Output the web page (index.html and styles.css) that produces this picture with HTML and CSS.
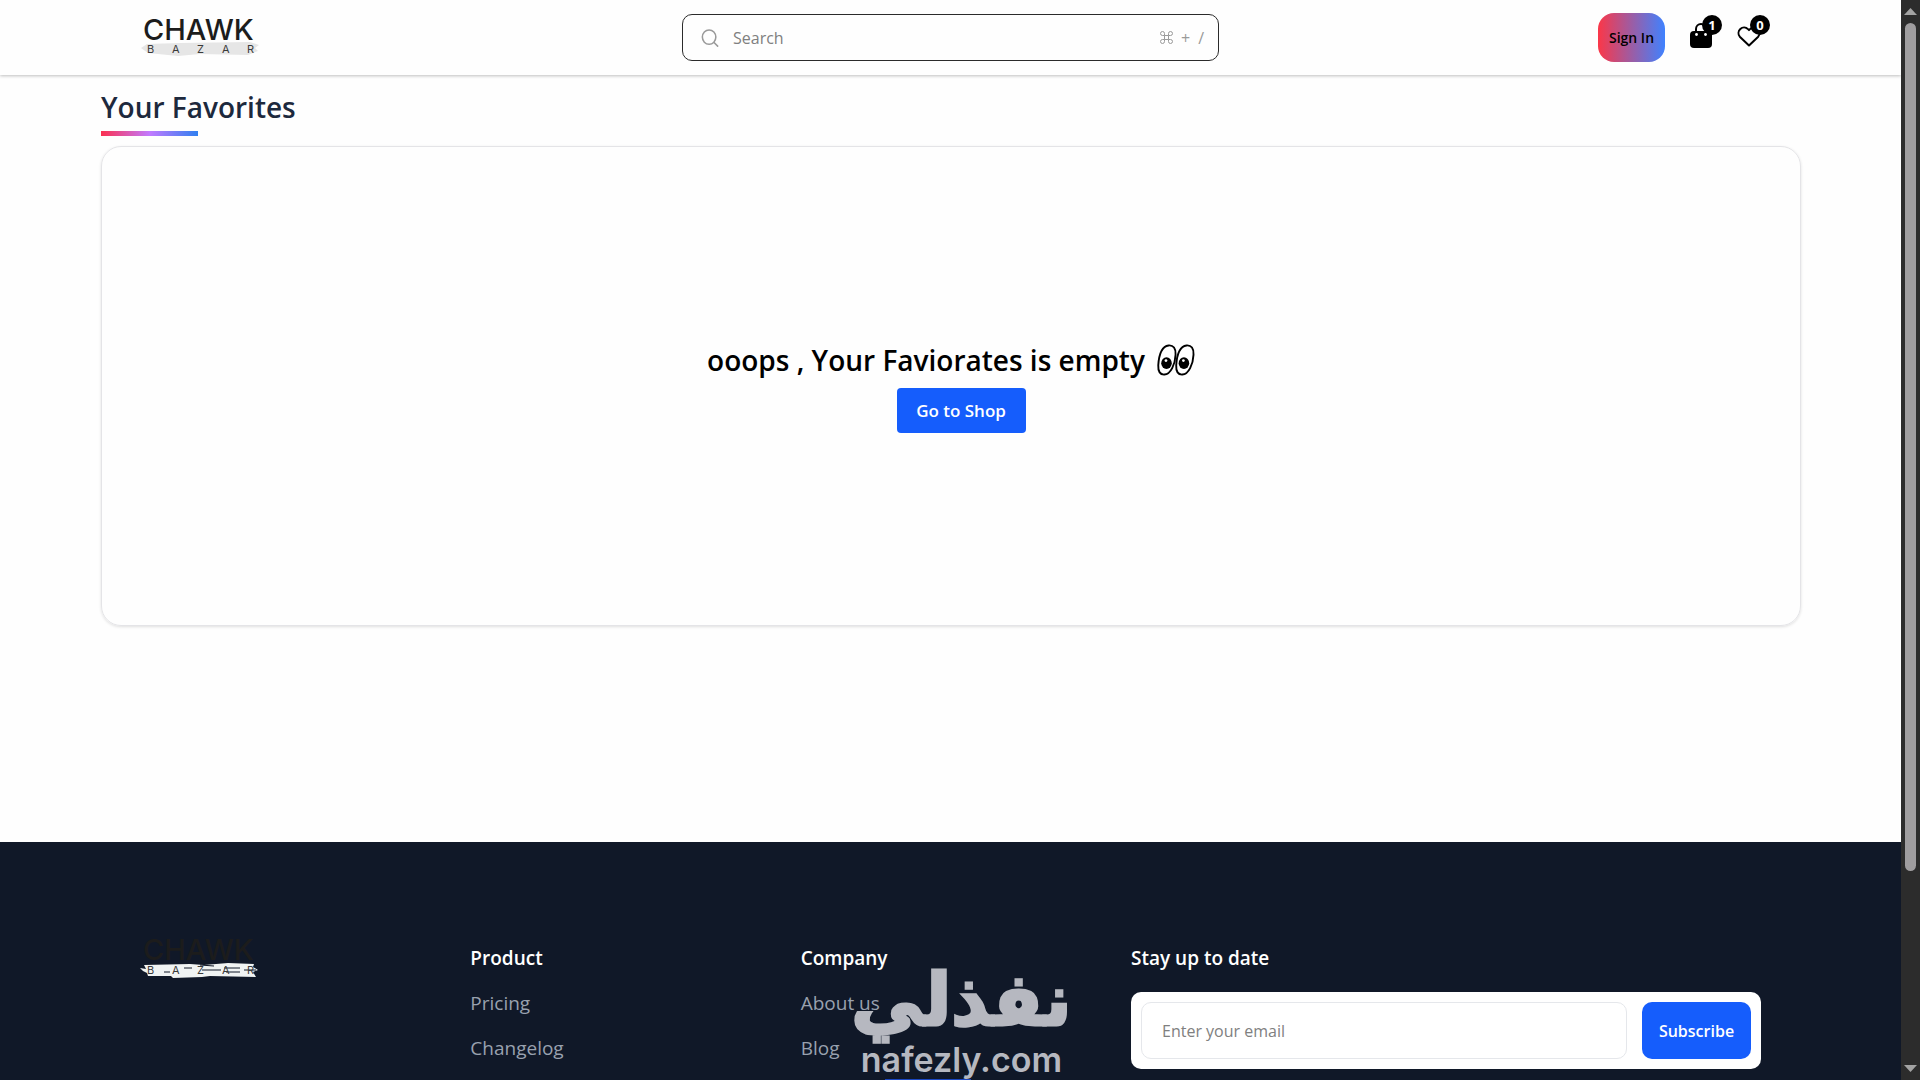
FILE: index.html
```html
<!DOCTYPE html>
<html lang="en">
<head>
<meta charset="utf-8">
<title>Your Favorites - Chawk Bazar</title>
<link rel="stylesheet" href="styles.css">
</head>
<body>
<div class="page">
  <header class="topbar">
    <a class="logo" href="#" aria-label="Chawk Bazar home">
      <svg width="120" height="44" viewBox="0 0 120 44">
        <path class="brush" d="M1 32L7 28L40 27L110 26L119 29L115 32L118 35L108 39L60 38L38 40L8 37Z"/>
        <text class="logo-name" x="3" y="24">CHAWK</text>
        <text class="logo-sub" x="7 32 57 82 107" y="37">BAZAR</text>
      </svg>
    </a>
    <form class="search" role="search">
      <svg width="18" height="18" viewBox="0 0 20 20" fill="none" stroke="#9a9a9a" stroke-width="1.7" stroke-linecap="round"><ellipse cx="9" cy="9" rx="7.5" ry="8"/><path d="M14.5 15L18.500 19"/></svg>
      <input class="search-input" type="search" placeholder="Search" aria-label="Search">
      <span class="shortcut"><svg width="13" height="13" viewBox="0 0 13 13" fill="none" stroke="currentColor"><path d="M4.500 4.500H8.500V8.500H4.500ZM4.500 4.500H2.500A2 2 0 1 1 4.500 2.500ZM8.500 4.500V2.500A2 2 0 1 1 10.500 4.500ZM8.500 8.500H10.500A2 2 0 1 1 8.500 10.500ZM4.500 8.500V10.500A2 2 0 1 1 2.500 8.500Z"/></svg><span>+</span><span>/</span></span>
    </form>
    <nav class="actions" aria-label="Account">
      <button class="sign-in" type="button">Sign In</button>
      <a class="icon-link" href="#" aria-label="Cart">
        <svg width="24" height="28" viewBox="0 0 24 28"><path d="M7 10V7a5 5 0 0 1 10 0v3" fill="none" stroke="#000" stroke-width="2"/><rect x="1" y="9" width="22" height="17" rx="4"/><circle cx="7.500" cy="12.500" r="1.400" fill="#fff"/><circle cx="16.500" cy="12.500" r="1.400" fill="#fff"/></svg>
        <span class="badge">1</span>
      </a>
      <a class="icon-link" href="#" aria-label="Favorites">
        <svg width="24" height="28" viewBox="0 0 24 28"><path d="M12 23.500L2.800 14.700A5.600 5.600 0 0 1 11 7.100L12 8.100L13 7.100A5.600 5.600 0 0 1 21.200 14.700Z" fill="none" stroke="#000" stroke-width="2" stroke-linejoin="round"/></svg>
        <span class="badge">0</span>
      </a>
    </nav>
  </header>

  <main class="content">
    <h1 class="title">Your Favorites</h1>
    <section class="empty">
      <h2 class="empty-text">ooops , Your Faviorates is empty
        <svg width="38" height="32" viewBox="0 0 36 30" role="img" aria-label="eyes"><g fill="#fff" stroke="#000" stroke-width="1.800"><path d="M11 1.200C15.500 .8 18 4 17.600 10C17.200 19 13 28.500 7 28.800C3 29 .9 26 1.200 20C1.800 10 5 2 11 1.200Z"/><path d="M28 1.200C32.500 .8 35 4 34.600 10C34.200 19 30 28.500 24 28.800C20 29 17.900 26 18.200 20C18.800 10 22 2 28 1.200Z"/></g><ellipse cx="9" cy="18" rx="5" ry="5.500"/><ellipse cx="25.500" cy="18" rx="5" ry="5.500"/><circle cx="8.500" cy="15.500" r="1.300" fill="#fff"/><circle cx="25" cy="15.500" r="1.300" fill="#fff"/></svg>
      </h2>
      <button class="shop" type="button">Go to Shop</button>
    </section>
  </main>

  <footer class="footer">
    <a class="footer-logo" href="#" aria-label="Chawk Bazar home">
      <svg width="120" height="44" viewBox="0 0 120 44">
        <path class="brush-light" d="M0 30L6 31L4 27L50 26L64 27L88 25L114 26L113 29L118 32L113 34L116 39L70 38L62 39L33 40L31 38L8 38L7 35L3 33Z"/>
        <path d="M24 34h6M44 30h8M62 32h19M84 30h16M86 34h14M104 32h12M60 27l14 1" stroke="#101828" fill="none"/>
        <text class="logo-name" x="3" y="22">CHAWK</text>
        <text class="logo-sub" x="7 32 57 82 107" y="36">BAZAR</text>
      </svg>
    </a>
    <nav class="links" aria-labelledby="product">
      <h3 class="footer-title" id="product">Product</h3>
      <a href="#">Pricing</a>
      <a href="#">Changelog</a>
    </nav>
    <nav class="links" aria-labelledby="company">
      <h3 class="footer-title" id="company">Company</h3>
      <a href="#">About us</a>
      <a href="#">Blog</a>
    </nav>
    <div class="newsletter">
      <h3 class="footer-title">Stay up to date</h3>
      <form class="subscribe">
        <input class="email" type="email" placeholder="Enter your email" aria-label="Email">
        <button class="subscribe-button" type="button">Subscribe</button>
      </form>
    </div>
  </footer>
  <div class="watermark"><span class="mark-ar" lang="ar" dir="rtl">نفذلي</span><span class="mark-en">nafezly.com</span></div>
</div>
<div class="scrollbar" aria-hidden="true">
  <svg width="13" height="7" viewBox="0 0 13 7"><path d="M0 7L6.500 0L13 7Z"/></svg>
  <div class="track"><div class="thumb"></div></div>
  <svg width="13" height="7" viewBox="0 0 13 7"><path d="M0 0L6.500 7L13 0Z"/></svg>
</div>
</body>
</html>
```
FILE: styles.css
```css
* { box-sizing: border-box; }
body {
  margin: 0;
  display: grid;
  grid-template-columns: 1fr 19px;
  height: 100vh;
  overflow: hidden;
  background: #fefefe;
  font-family: "Open Sans", "Noto Sans", sans-serif;
  font-size: 16px;
  color: #000;
}
h1, h2, h3 { margin: 0; font-weight: 600; }
a { color: inherit; text-decoration: none; }
button, input { font: inherit; border: 0; outline: 0; }
input::placeholder { color: #808080; opacity: 1; }
svg { display: block; flex: none; }
.page {
  position: relative;
  display: flex;
  flex-direction: column;
  height: 100vh;
  overflow: hidden;
}

.topbar {
  display: grid;
  grid-template-columns: 1fr 537px 1fr;
  align-items: center;
  flex: none;
  height: 75px;
  padding: 0 140px;
  box-shadow: 0 1px 3px rgba(0, 0, 0, .25);
}
.logo { justify-self: start; }
.brush { fill: #e6e6e6; }
.brush-light { fill: #f0f3f3; }
.logo-name { font: 500 29px Inter, sans-serif; fill: #1c1c1c; }
.logo-sub { font: 400 11px Inter, sans-serif; fill: #3a3a3a; }
.search {
  display: flex;
  align-items: center;
  gap: 14px;
  height: 47px;
  padding: 0 14px 0 18px;
  border: 1px solid #2b2b2b;
  border-radius: 10px;
}
.search-input { flex: 1; min-width: 0; padding: 0; background: none; }
.shortcut { display: flex; align-items: center; gap: 8px; color: #9a9a9a; }
.actions { display: flex; align-items: center; justify-content: flex-end; gap: 24px; }
.sign-in {
  width: 67px;
  height: 49px;
  padding: 0;
  border-radius: 16px;
  background: linear-gradient(90deg, #fb3748, #3f82ff);
  font-size: 14px;
  font-weight: 600;
}
.icon-link { position: relative; margin-bottom: 4px; }
.badge {
  position: absolute;
  top: -7px;
  left: 13px;
  width: 20px;
  height: 20px;
  border-radius: 50%;
  background: #000;
  color: #fff;
  font-size: 13px;
  font-weight: 700;
  line-height: 20px;
  text-align: center;
}

.content { flex: none; padding: 14px 100px 0 101px; height: 767px; }
.title {
  font-size: 28px;
  line-height: 36px;
  color: #1d293d;
  width: fit-content;
}
.title::after {
  content: "";
  display: block;
  width: 50%;
  height: 5px;
  margin-top: 6px;
  background: linear-gradient(90deg, #fb3050, #c27aff, #3080f0);
}
.empty {
  display: flex;
  flex-direction: column;
  align-items: center;
  justify-content: center;
  gap: 8px;
  height: 480px;
  margin-top: 10px;
  border: 1px solid #e4e4e7;
  border-radius: 20px;
  box-shadow: 0 1px 3px rgba(0, 0, 0, .12);
}
.empty-text { display: flex; align-items: center; gap: 12px; font-size: 28px; line-height: 40px; }
.shop {
  width: 129px;
  height: 45px;
  margin-left: 20px;
  padding: 0;
  border-radius: 4px;
  background: #155dfc;
  color: #fff;
  font-size: 17px;
  font-weight: 600;
}

.footer {
  display: grid;
  grid-template-columns: repeat(3, minmax(0, 1fr)) minmax(0, 630px);
  gap: 30px;
  flex: 1 0 auto;
  align-items: start;
  padding: 96px 140px 0;
  background: #101828;
  color: #99a1af;
  font-size: 19px;
  line-height: 30px;
}
.links, .newsletter { padding-top: 5px; }
.links { display: flex; flex-direction: column; gap: 15px; }
.footer-title { font-size: 19px; line-height: 30px; color: #fff; }
.subscribe {
  display: flex;
  gap: 15px;
  margin-top: 19px;
  padding: 10px;
  border-radius: 10px;
  background: #fff;
}
.email {
  flex: 1;
  min-width: 0;
  height: 57px;
  padding: 0 20px;
  border: 1px solid #e5e7eb;
  border-radius: 10px;
  font-size: 16px;
}
.subscribe-button {
  width: 109px;
  padding: 0;
  border-radius: 10px;
  background: #155dfc;
  color: #fff;
  font-size: 16px;
  font-weight: 600;
}

.watermark {
  position: absolute;
  left: 45%;
  bottom: 0;
  width: 212px;
  display: flex;
  flex-direction: column;
  align-items: center;
  background: linear-gradient(#1d4ed8, #1d4ed8) 30px 100% / 86px 1px no-repeat;
  color: #cdcfd5;
  opacity: .88;
}
.mark-ar { font: 700 72px/80px "DejaVu Sans", sans-serif; -webkit-text-stroke: 3px #cdcfd5; }
.mark-en { font: 600 34px/40px Inter, sans-serif; }

.scrollbar {
  display: flex;
  flex-direction: column;
  align-items: center;
  gap: 8px;
  padding: 8px 0;
  background: #2c2c2c;
  fill: #a3a3a3;
}
.track { flex: 1; width: 11px; }
.thumb { height: 82%; border-radius: 6px; background: #9f9d9f; }
```
